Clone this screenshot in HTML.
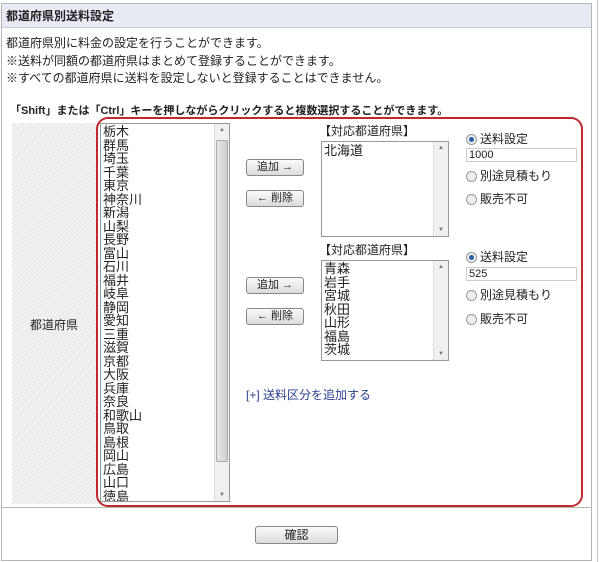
<!DOCTYPE html>
<html><head><meta charset="utf-8"><style>
*{box-sizing:border-box;margin:0;padding:0}
body{width:600px;height:562px;background:#fff;position:relative;font-family:"Liberation Sans","Noto Sans CJK JP",sans-serif;color:#222;overflow:hidden}
.a{position:absolute}
.t{font-size:12px;line-height:14px;white-space:nowrap}
.sel{position:absolute;border:1px solid #999;background:#fff;overflow:hidden}
.sel .sb{position:absolute;right:0;top:0;bottom:0;width:15px;background:#f0f0f0;border-left:1px solid #ddd}
.sel .th{position:absolute;left:1px;right:1px;background:linear-gradient(90deg,#e6e6e6,#cfcfcf);border:1px solid #aaa;border-radius:2px}
.sel .items{position:absolute;left:2px;top:0;font-size:13px;line-height:13.5px;white-space:pre}
.btn{position:absolute;border:1px solid #888;border-radius:3px;background:linear-gradient(#fafafa,#dcdcdc);font-size:11px;text-align:center;line-height:15px}
.rad{position:absolute;width:11px;height:11px;border-radius:50%;border:1px solid #999;background:#eee}
.rad.on::after{content:"";position:absolute;left:2px;top:2px;width:5px;height:5px;border-radius:50%;background:#2a5ea8}
.inp{position:absolute;border:1px solid #ccc;background:#fff;font-size:11px;line-height:12px;padding-left:2px}
.ar{position:absolute;right:4px;font-size:6px;color:#777}
</style></head><body>
<div class="a" style="left:1px;top:3px;width:591px;height:558px;border:1px solid #b5b5b5"></div>
<div class="a" style="left:597px;top:0;width:1px;height:562px;background:#c8c8c8"></div>
<div class="a" style="left:2px;top:4px;width:589px;height:24px;background:#e8ebf3;border-bottom:1px solid #c6cad6"></div>
<div class="a t" style="left:6px;top:9px;font-weight:bold;font-size:12px">都道府県別送料設定</div>
<div class="a t" style="left:6px;top:36px">都道府県別に料金の設定を行うことができます。</div>
<div class="a t" style="left:6px;top:54px">※送料が同額の都道府県はまとめて登録することができます。</div>
<div class="a t" style="left:6px;top:71px">※すべての都道府県に送料を設定しないと登録することはできません。</div>
<div class="a t" style="left:10px;top:104px;font-weight:bold;font-size:11px">「Shift」または「Ctrl」キーを押しながらクリックすると複数選択することができます。</div>
<div class="a" style="left:2px;top:507px;width:589px;height:1px;background:#b5b5b5"></div>
<div class="a" style="left:12px;top:123px;width:86px;height:381px;background:repeating-linear-gradient(135deg,#f3f3f3 0 2px,#e6e6e6 2px 3px)"></div>
<div class="a t" style="left:30px;top:318px">都道府県</div>
<div class="a" style="left:96px;top:117px;width:487px;height:390px;border:2px solid #c0282e;border-radius:12px"></div>
<div class="sel" style="left:100px;top:123px;width:130px;height:379px">
<div class="items" style="top:1px">栃木
群馬
埼玉
千葉
東京
神奈川
新潟
山梨
長野
富山
石川
福井
岐阜
静岡
愛知
三重
滋賀
京都
大阪
兵庫
奈良
和歌山
鳥取
島根
岡山
広島
山口
徳島</div>
<div class="sb"><div class="th" style="top:16px;height:322px"></div><div class="ar" style="top:3px">▲</div><div class="ar" style="bottom:3px">▼</div></div></div>
<div class="btn" style="left:246px;top:159px;width:58px;height:17px">追加 →</div>
<div class="btn" style="left:246px;top:190px;width:58px;height:17px">← 削除</div>
<div class="btn" style="left:246px;top:277px;width:58px;height:17px">追加 →</div>
<div class="btn" style="left:246px;top:308px;width:58px;height:17px">← 削除</div>
<div class="a t" style="left:319px;top:124px;font-size:12px">【対応都道府県】</div>
<div class="sel" style="left:321px;top:141px;width:128px;height:96px"><div class="items" style="top:2px">北海道</div><div class="sb"><div class="ar" style="top:3px">▲</div><div class="ar" style="bottom:3px">▼</div></div></div>
<div class="a t" style="left:319px;top:243px;font-size:12px">【対応都道府県】</div>
<div class="sel" style="left:321px;top:260px;width:128px;height:101px"><div class="items" style="top:1px">青森
岩手
宮城
秋田
山形
福島
茨城</div><div class="sb"><div class="ar" style="top:3px">▲</div><div class="ar" style="bottom:3px">▼</div></div></div>
<div class="rad on" style="left:466px;top:134px"></div><div class="a t" style="left:480px;top:132px">送料設定</div>
<div class="inp" style="left:466px;top:148px;width:111px;height:14px">1000</div>
<div class="rad" style="left:466px;top:171px"></div><div class="a t" style="left:480px;top:169px">別途見積もり</div>
<div class="rad" style="left:466px;top:194px"></div><div class="a t" style="left:480px;top:192px">販売不可</div>
<div class="rad on" style="left:466px;top:252px"></div><div class="a t" style="left:480px;top:250px">送料設定</div>
<div class="inp" style="left:466px;top:267px;width:111px;height:14px">525</div>
<div class="rad" style="left:466px;top:290px"></div><div class="a t" style="left:480px;top:288px">別途見積もり</div>
<div class="rad" style="left:466px;top:314px"></div><div class="a t" style="left:480px;top:312px">販売不可</div>
<div class="a t" style="left:246px;top:388px;color:#2a3f8f">[+] 送料区分を追加する</div>
<div class="btn" style="left:255px;top:526px;width:83px;height:18px;font-size:12px;line-height:16px">確認</div>
</body></html>
